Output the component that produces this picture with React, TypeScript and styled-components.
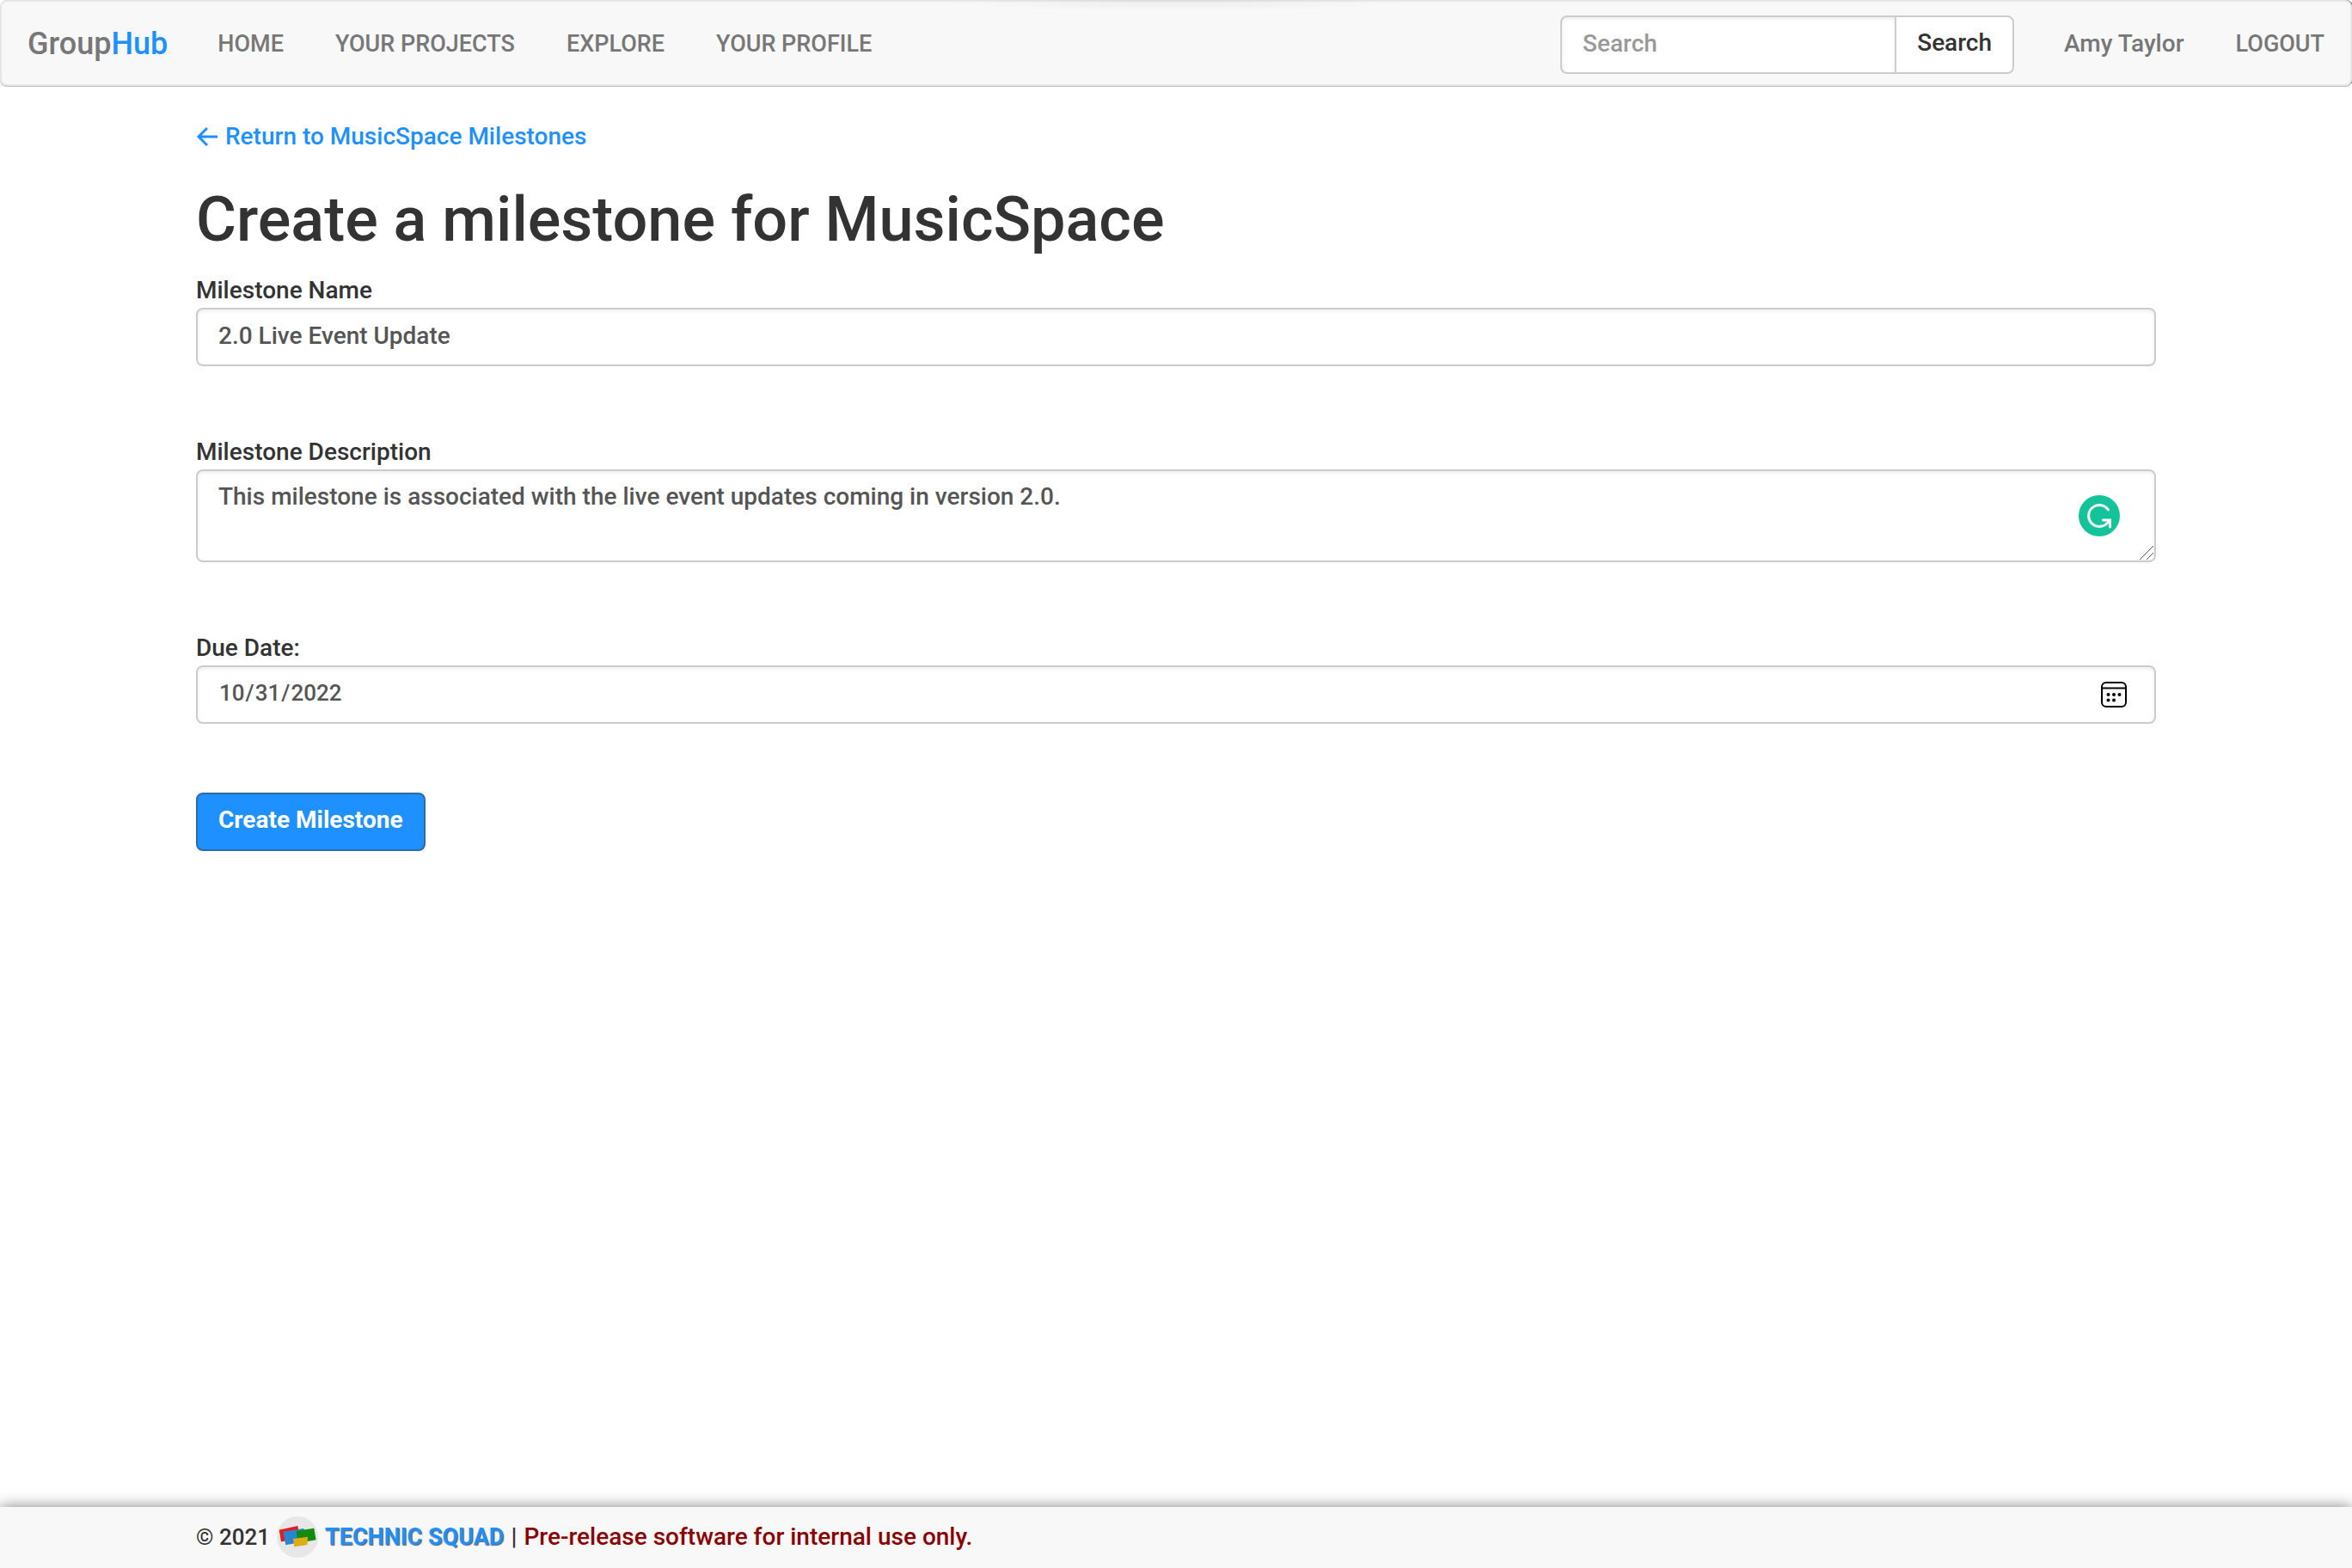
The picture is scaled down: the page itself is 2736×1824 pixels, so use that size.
import React from 'react';
import styled, { createGlobalStyle } from 'styled-components';

const Global = createGlobalStyle`
  *, *::before, *::after { box-sizing: border-box; }
  body {
    margin: 0;
    background: #fff;
    color: #333;
    font-family: Roboto, "Liberation Sans", sans-serif;
    font-size: 28px;
    font-weight: 500;
    line-height: 40px;
  }
  input, textarea, button { font: inherit; }
`;

const Page = styled.div`
  display: flex;
  flex-direction: column;
  min-height: 100vh;
`;

const NavBar = styled.nav`
  position: relative;
  display: flex;
  align-items: center;
  height: 100px;
  padding: 16px 30px 12px;
  background: #f8f8f8;
  border: 2px solid #e7e7e7;
  border-radius: 8px;
  box-shadow: 0 1px 0 #bbb, 1px 0 0 #666;
  white-space: nowrap;
  &::before {
    content: '';
    position: absolute;
    top: -2px;
    left: 50%;
    width: 560px;
    height: 14px;
    margin-left: -280px;
    background: radial-gradient(ellipse at top, rgba(0, 0, 0, 0.05), transparent 70%);
  }
`;

const Brand = styled.a`
  margin-right: 58px;
  padding-bottom: 2px;
  color: #777;
  font-size: 36px;
  text-decoration: none;
`;

const BrandAccent = styled.span`
  color: #1e90ff;
`;

const NavLinks = styled.div`
  display: flex;
  gap: 60px;
  padding-bottom: 2px;
`;

const NavLink = styled.a<{ $caps?: boolean }>`
  color: #777;
  font-size: ${(p) => (p.$caps ? 27 : 28)}px;
  text-decoration: none;
`;

const SearchForm = styled.form`
  display: flex;
  width: 528px;
  margin: 0 58px 0 auto;
`;

const SearchInput = styled.input`
  flex: 1;
  min-width: 0;
  height: 68px;
  padding: 10px 24px 14px;
  border: 2px solid #ccc;
  border-right-width: 0;
  border-radius: 8px 0 0 8px;
  box-shadow: inset 0 2px 4px rgba(0, 0, 0, 0.08);
  color: #555;
  &::placeholder { color: #999; opacity: 1; }
`;

const SearchButton = styled.button`
  height: 68px;
  padding: 10px 24px 14px;
  background: #fff;
  border: 2px solid #ccc;
  border-radius: 0 8px 8px 0;
  color: #333;
`;

const Main = styled.main`
  flex: 1;
  width: calc(100% * 10 / 12);
  margin: 0 auto;
  padding-top: 39px;
`;

const BackLink = styled.a`
  display: inline-flex;
  align-items: center;
  gap: 8px;
  color: #1e90ff;
  text-decoration: none;
  vertical-align: top;
`;

const Title = styled.h1`
  margin: 37px 0 22px;
  font-size: 72px;
  font-weight: 500;
  line-height: 80px;
`;

const Field = styled.div`
  display: flex;
  flex-direction: column;
  margin-bottom: 80px;
`;

const Control = styled.div`
  position: relative;
  display: flex;
`;

const TextInput = styled.input`
  width: 100%;
  height: 68px;
  padding: 10px 24px 14px;
  background: #fff;
  border: 2px solid #ccc;
  border-radius: 8px;
  box-shadow: inset 0 2px 4px rgba(0, 0, 0, 0.08);
  color: #555;
`;

const DateInput = styled(TextInput)`
  font-size: 26px;
  &::-webkit-calendar-picker-indicator { opacity: 0; }
`;

const TextArea = styled.textarea`
  width: 100%;
  height: 108px;
  padding: 10px 24px;
  border: 2px solid #ccc;
  border-radius: 8px;
  box-shadow: inset 0 2px 4px rgba(0, 0, 0, 0.08);
  color: #555;
  resize: none;
`;

const Overlay = styled.svg<{ $right: number; $bottom: number }>`
  position: absolute;
  right: ${(p) => p.$right}px;
  bottom: ${(p) => p.$bottom}px;
  pointer-events: none;
`;

const SubmitButton = styled.button`
  height: 68px;
  padding: 10px 24px 14px;
  background: #1e90ff;
  border: 2px solid #2e6da4;
  border-radius: 8px;
  color: #fff;
  font-weight: 700;
`;

const Footer = styled.footer`
  display: flex;
  align-items: center;
  height: 71px;
  gap: 8px;
  padding: 0 calc(100% / 12) 2px;
  background: #f8f8f8;
  box-shadow: 0 0 16px rgba(0, 0, 0, 0.5);
`;

const Copyright = styled.span`
  font-size: 26px;
`;

const TeamLink = styled.a`
  display: flex;
  align-items: center;
  gap: 8px;
  color: #1e90ff;
  font-size: 27px;
  font-weight: 700;
  text-decoration: none;
  text-shadow: 1px 1px 1px rgba(0, 0, 0, 0.6);
`;

const Notice = styled.span`
  color: #8b0000;
`;

export default function App() {
  return (
    <Page>
      <Global />
      <NavBar>
        <Brand href="#">Group<BrandAccent>Hub</BrandAccent></Brand>
        <NavLinks>
          <NavLink $caps href="#">HOME</NavLink>
          <NavLink $caps href="#">YOUR PROJECTS</NavLink>
          <NavLink $caps href="#">EXPLORE</NavLink>
          <NavLink $caps href="#">YOUR PROFILE</NavLink>
        </NavLinks>
        <SearchForm>
          <SearchInput type="text" placeholder="Search" aria-label="Search" />
          <SearchButton type="button">Search</SearchButton>
        </SearchForm>
        <NavLinks>
          <NavLink href="#">Amy Taylor</NavLink>
          <NavLink $caps href="#">LOGOUT</NavLink>
        </NavLinks>
      </NavBar>
      <Main>
        <BackLink href="#">
          <svg width="26" height="24" viewBox="0 0 26 24" fill="none" stroke="currentColor" strokeWidth="3">
            <path d="M25 12H4M13 2L3 12L13 22" />
          </svg>
          Return to MusicSpace Milestones
        </BackLink>
        <Title>Create a milestone for MusicSpace</Title>
        <form>
          <Field>
            <label htmlFor="name">Milestone Name</label>
            <Control><TextInput id="name" type="text" defaultValue="2.0 Live Event Update" /></Control>
          </Field>
          <Field>
            <label htmlFor="description">Milestone Description</label>
            <Control>
              <TextArea id="description" defaultValue="This milestone is associated with the live event updates coming in version 2.0." />
              <Overlay $right={42} $bottom={30} width="48" height="48" viewBox="0 0 48 48" fill="none">
                <circle cx="24" cy="24" r="24" fill="#15c39a" />
                <path
                  d="M34.5 17A12.5 12.5 0 1 0 33 32.8L36 29.5M28.5 29H36.5V37"
                  stroke="#fff"
                  strokeWidth="3"
                  strokeLinecap="round"
                />
              </Overlay>
              <Overlay $right={3} $bottom={3} width="16" height="16" viewBox="0 0 16 16" stroke="#555">
                <path d="M0 16L16 0M8 16L16 8" />
              </Overlay>
            </Control>
          </Field>
          <Field>
            <label htmlFor="due">Due Date:</label>
            <Control>
              <DateInput id="due" type="date" defaultValue="2022-10-31" />
              <Overlay $right={34} $bottom={19} width="30" height="30" viewBox="0 0 30 30" fill="none">
                <rect x="1" y="1" width="28" height="28" rx="5" stroke="#000" strokeWidth="2" />
                <path d="M1 7.5H29" stroke="#000" strokeWidth="2" />
                <g fill="#000">
                  <circle cx="8.5" cy="15" r="2" /><circle cx="15" cy="15" r="2" /><circle cx="21.5" cy="15" r="2" />
                  <circle cx="8.5" cy="21.5" r="2" /><circle cx="15" cy="21.5" r="2" />
                </g>
              </Overlay>
            </Control>
          </Field>
          <SubmitButton type="button">Create Milestone</SubmitButton>
        </form>
      </Main>
      <Footer>
        <Copyright>© 2021</Copyright>
        <TeamLink href="#">
          <svg width="48" height="48" viewBox="0 0 48 48">
            <circle cx="24" cy="24" r="24" fill="#e7e7e7" />
            <path fill="#e31b1b" d="M2.7 15.7L24.3 11L27 25L5 29.5Z" />
            <path fill="#2a84d2" d="M7.3 17.7L31.5 14L34 29L10.3 33.3Z" />
            <path fill="#138a13" d="M22.3 17L43.3 13.7L45.6 27.3L25 31Z" />
            <path fill="#dcae14" d="M19 26L36 23.7L35.5 33L20.3 35.3Z" />
          </svg>
          TECHNIC SQUAD
        </TeamLink>
        <span>|</span>
        <Notice>Pre-release software for internal use only.</Notice>
      </Footer>
    </Page>
  );
}
